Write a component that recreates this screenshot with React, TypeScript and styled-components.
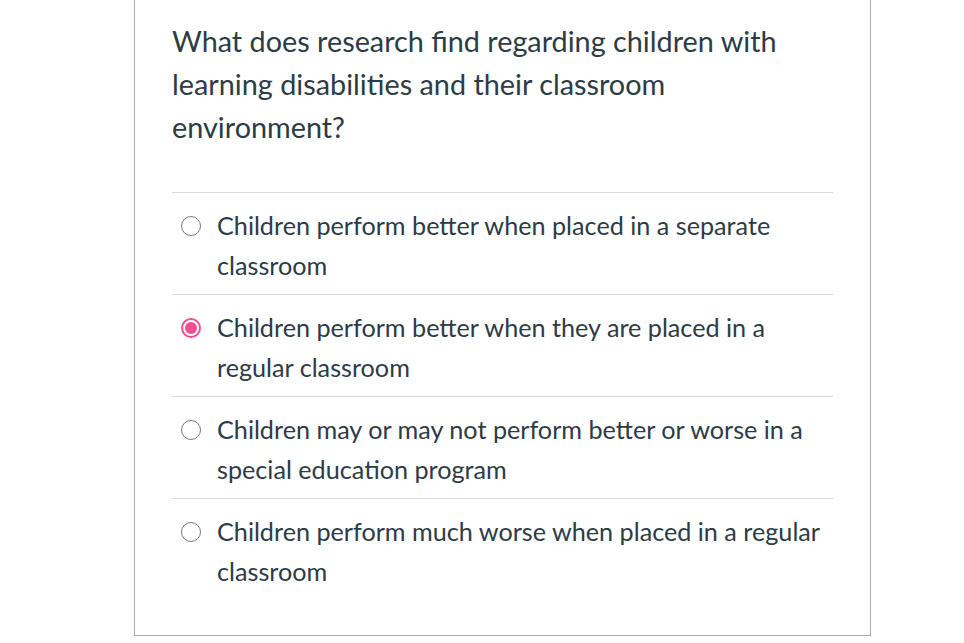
import React from "react";
import styled, { createGlobalStyle } from "styled-components";

const Global = createGlobalStyle`
  html, body { margin: 0; padding: 0; background: #fff; }
  body { font-family: Lato, "Liberation Sans", sans-serif; color: #2d3b45; }
`;

const Page = styled.div`
  width: 964px;
  height: 643px;
  display: flex;
  justify-content: flex-start;
  padding-left: 134px;
  box-sizing: border-box;
  overflow: hidden;
`;

const Card = styled.div`
  width: 737px;
  height: 636px;
  box-sizing: border-box;
  border: 1px solid #aaaaaa;
  border-top: none;
  padding: 20px 37px 0 37px;
`;

const Question = styled.div`
  font-size: 28.8px;
  line-height: 43px;
  color: #2d3b45;
  padding-bottom: 43px;
  border-bottom: 1px solid #dcdcdc;
`;

const Option = styled.label<{ $last?: boolean }>`
  display: flex;
  align-items: flex-start;
  gap: 16px;
  padding: 12px 0 9px 9px;
  border-bottom: ${(p) => (p.$last ? "none" : "1px solid #dcdcdc")};
  cursor: pointer;
`;

const Radio = styled.span<{ $checked?: boolean }>`
  flex: none;
  margin-top: 11px;
  width: 20px;
  height: 20px;
  box-sizing: border-box;
  border-radius: 50%;
  border: ${(p) => (p.$checked ? "2px solid #f54d94" : "1.5px solid #7b7b7b")};
  display: flex;
  align-items: center;
  justify-content: center;
  &::after {
    content: "";
    display: ${(p) => (p.$checked ? "block" : "none")};
    width: 12px;
    height: 12px;
    border-radius: 50%;
    background: #f54d94;
  }
`;

const OptionText = styled.span`
  font-size: 25.2px;
  line-height: 40px;
  color: #2d3b45;
`;

const options = [
  "Children perform better when placed in a separate classroom",
  "Children perform better when they are placed in a regular classroom",
  "Children may or may not perform better or worse in a special education program",
  "Children perform much worse when placed in a regular classroom",
];

export default function App() {
  return (
    <>
      <Global />
      <Page>
        <Card>
          <Question>
            What does research find regarding children with learning disabilities and their
            classroom environment?
          </Question>
          {options.map((o, i) => (
            <Option key={i} $last={i === options.length - 1}>
              <Radio $checked={i === 1} />
              <OptionText>{o}</OptionText>
            </Option>
          ))}
        </Card>
      </Page>
    </>
  );
}
